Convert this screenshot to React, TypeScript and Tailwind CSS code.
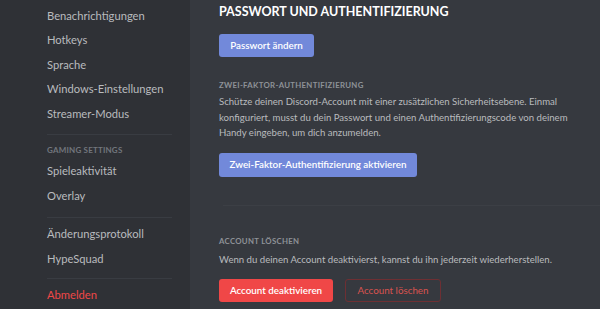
const sidebarGroups: string[][] = [
  ["Benachrichtigungen", "Hotkeys", "Sprache", "Windows-Einstellungen", "Streamer-Modus"],
];

function NavItem({ label, danger }: { label: string; danger?: boolean }) {
  return (
    <div
      className={`flex h-[24.5px] items-center text-[11.2px] ${
        danger ? "text-[#f04747]" : "text-[#b9bbbe]"
      }`}
    >
      {label}
    </div>
  );
}

function Divider({ className }: { className: string }) {
  return <div className={`h-px bg-[#393c42] ${className}`} />;
}

function Sidebar() {
  return (
    <aside className="w-[190px] shrink-0 bg-[#2f3136] pl-[47px] pr-[18px] pt-[4px]">
      {sidebarGroups[0].map((item) => (
        <NavItem key={item} label={item} />
      ))}
      <Divider className="mb-[7px] mt-[7px]" />
      <div className="flex h-[16px] items-center text-[8px] font-bold uppercase tracking-[0.2px] text-[#72767d]">
        Gaming Settings
      </div>
      <div className="mt-[2px]">
        <NavItem label="Spieleaktivität" />
        <NavItem label="Overlay" />
      </div>
      <Divider className="mb-[5px] mt-[8px]" />
      <NavItem label="Änderungsprotokoll" />
      <NavItem label="HypeSquad" />
      <Divider className="mb-[5px] mt-[6px]" />
      <NavItem label="Abmelden" danger />
    </aside>
  );
}

function SectionLabel({ children, className }: { children: string; className?: string }) {
  return (
    <div
      className={`text-[7.8px] font-bold uppercase tracking-[0.3px] text-[#8e9297] ${className ?? ""}`}
    >
      {children}
    </div>
  );
}

export default function App() {
  return (
    <div
      className="flex h-[309px] w-[600px] overflow-hidden bg-[#36393f]"
      style={{ fontFamily: "Lato, 'Noto Sans', sans-serif" }}
    >
      <Sidebar />
      <main className="flex-1 pl-[29px]">
        <h1 className="flex h-[24px] items-center text-[12.5px] font-bold uppercase text-white">
          Passwort und Authentifizierung
        </h1>
        <button className="mt-[10px] flex h-[23px] w-[95px] items-center justify-center rounded-[3px] bg-[#7289da] text-[9.8px] font-semibold text-white">
          Passwort ändern
        </button>
        <SectionLabel className="mt-[23px] leading-[10px]">Zwei-Faktor-Authentifizierung</SectionLabel>
        <p className="mt-[4px] w-[356px] text-[9.6px] leading-[15.5px] text-[#b9bbbe]">
          Schütze deinen Discord-Account mit einer zusätzlichen Sicherheitsebene. Einmal
          konfiguriert, musst du dein Passwort und einen Authentifizierungscode von deinem
          Handy eingeben, um dich anzumelden.
        </p>
        <button className="mt-[12px] flex h-[24px] w-[198px] items-center justify-center rounded-[3px] bg-[#7289da] text-[9.8px] font-semibold text-white">
          Zwei-Faktor-Authentifizierung aktivieren
        </button>
        <div className="ml-[4px] mt-[28px] h-px bg-[#3c3f45]" />
        <SectionLabel className="mt-[30px] leading-[10px]">Account löschen</SectionLabel>
        <p className="mt-[6.5px] text-[9.6px] leading-[15px] text-[#b9bbbe]">
          Wenn du deinen Account deaktivierst, kannst du ihn jederzeit wiederherstellen.
        </p>
        <div className="mt-[11.5px] flex gap-[12px]">
          <button className="flex h-[23px] w-[114px] items-center justify-center rounded-[3px] bg-[#f04747] text-[9.8px] font-semibold text-white">
            Account deaktivieren
          </button>
          <button className="flex h-[23px] w-[96px] items-center justify-center rounded-[3px] border border-[#6e2f33] text-[9.8px] text-[#d9534f]">
            Account löschen
          </button>
        </div>
      </main>
    </div>
  );
}
